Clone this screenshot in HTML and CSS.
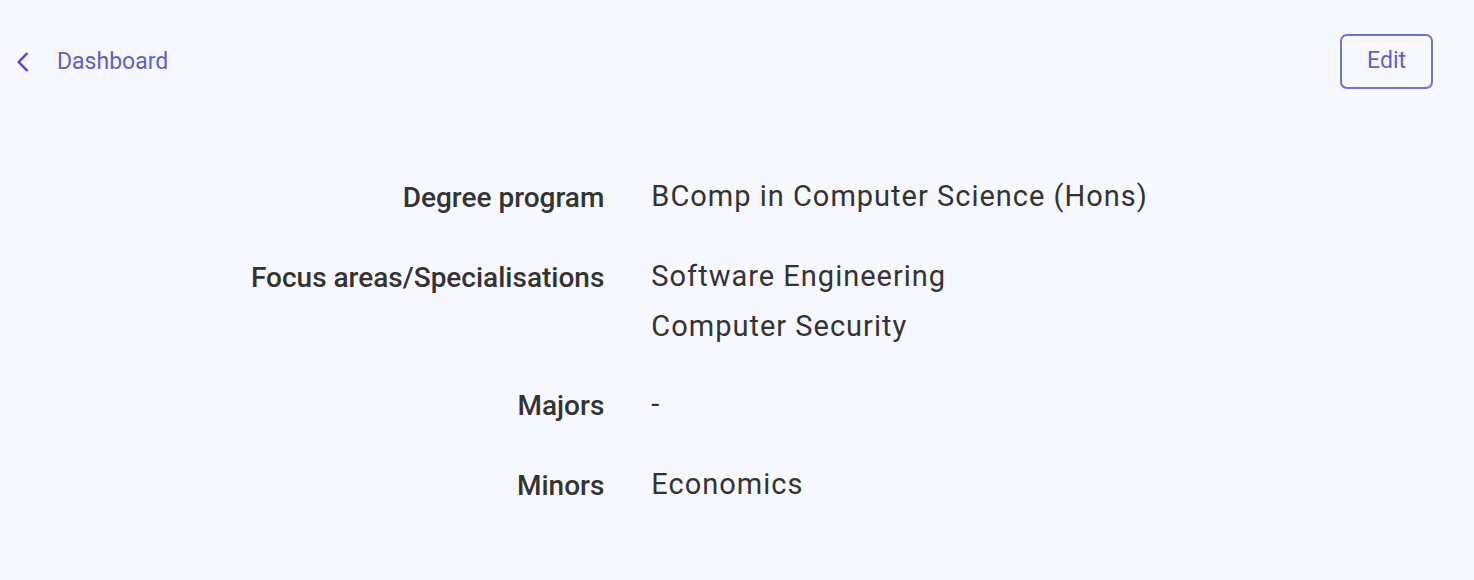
FILE: index.html
```html
<!DOCTYPE html>
<html lang="en">
<head>
<meta charset="utf-8">
<meta name="viewport" content="width=device-width, initial-scale=1">
<title>Academic profile</title>
<link rel="stylesheet" href="styles.css">
</head>
<body>
<header class="topbar">
  <a class="back" href="#"><svg class="chevron" viewBox="0 0 12 20" aria-hidden="true"><path d="M10.5 1 1.7 10l8.8 9"/></svg><span>Dashboard</span></a>
  <button class="edit" type="button">Edit</button>
</header>
<main>
  <dl class="details">
    <dt>Degree program</dt>
    <dd>BComp in Computer Science (Hons)</dd>
    <dt>Focus areas/Specialisations</dt>
    <dd><ul class="areas"><li>Software Engineering</li><li>Computer Security</li></ul></dd>
    <dt>Majors</dt>
    <dd>-</dd>
    <dt>Minors</dt>
    <dd>Economics</dd>
  </dl>
</main>
</body>
</html>
```

FILE: styles.css
```css
* { box-sizing: border-box; }
body {
  margin: 0;
  background: #f7f8fd;
  color: #333333;
  font-family: Roboto, sans-serif;
}
.topbar {
  display: flex;
  justify-content: space-between;
  align-items: center;
  padding: 34px 41px 0 17px;
}
.back {
  display: flex;
  align-items: center;
  gap: 28px;
  color: #5e61c9;
  font-size: 23px;
  line-height: 32px;
  text-decoration: none;
}
.chevron {
  width: 12px;
  height: 20px;
  fill: none;
  stroke: #6238de;
  stroke-width: 2.5;
}
.edit {
  padding: 9px 25px 10px;
  border: 2px solid #7073cf;
  border-radius: 7px;
  background: transparent;
  color: #5e61c9;
  font: 23px/32px Roboto, sans-serif;
}
.details {
  display: grid;
  grid-template-columns: 41% 1fr;
  column-gap: 47px;
  row-gap: 32px;
  margin: 84px 0 0;
  font-size: 29px;
  line-height: 46px;
}
dt {
  padding-top: 2px;
  font-weight: 500;
  font-size: 28px;
  text-align: right;
}
dd { margin: 0; letter-spacing: 1px; }
.areas {
  display: grid;
  gap: 4px;
  margin: 0;
  padding: 0;
  list-style: none;
}
```
